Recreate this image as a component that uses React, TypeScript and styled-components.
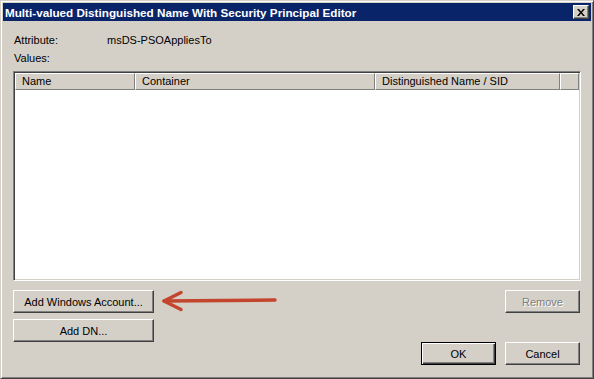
import React from "react";
import styled, { createGlobalStyle } from "styled-components";

const columns = [
  { label: "Name", width: 120 },
  { label: "Container", width: 240 },
  { label: "Distinguished Name / SID", width: 185 },
  { label: "", width: 19 },
];

const App = () => {
  return (
    <>
      <GlobalStyle />
      <Window>
        <TitleBar>
          <Title>Multi-valued Distinguished Name With Security Principal Editor</Title>
          <CloseButton aria-label="Close">
            <svg width="8" height="7" viewBox="0 0 8 7">
              <path d="M0 0h2l2 2.5L6 0h2L5 3.5 8 7H6L4 4.5 2 7H0l3-3.5z" fill="#000" />
            </svg>
          </CloseButton>
        </TitleBar>
        <Body>
          <FieldRow>
            <FieldLabel>Attribute:</FieldLabel>
            <span>msDS-PSOAppliesTo</span>
          </FieldRow>
          <FieldRow>
            <FieldLabel>Values:</FieldLabel>
          </FieldRow>
          <ListView>
            <HeaderRow>
              {columns.map((c, i) => (
                <HeaderCell key={i} style={{ width: c.width }}>
                  {c.label}
                </HeaderCell>
              ))}
            </HeaderRow>
          </ListView>
          <Bottom>
            <ButtonStack>
              <Button $wide>Add Windows Account...</Button>
              <Button $wide>Add DN...</Button>
            </ButtonStack>
            <RightStack>
              <Button disabled>Remove</Button>
              <ButtonRow>
                <Button $default>OK</Button>
                <Button>Cancel</Button>
              </ButtonRow>
            </RightStack>
          </Bottom>
        </Body>
        <Arrow width="120" height="24" viewBox="0 0 120 24">
          <path d="M3 12 L114 11" stroke="#c4452d" strokeWidth="3.5" strokeLinecap="round" />
          <path d="M20 3.5 L3 12 L20 20.5" stroke="#c4452d" strokeWidth="3.5" fill="none" strokeLinecap="round" strokeLinejoin="round" />
        </Arrow>
      </Window>
    </>
  );
};
export default App;

// styled-components -----------------
const GlobalStyle = createGlobalStyle`
  html, body {
    margin: 0;
    padding: 0;
    background: #d4d0c8;
  }
  body {
    font-family: Tahoma, "Liberation Sans", Arial, sans-serif;
    font-size: 11px;
    color: #000;
  }
`;

const Window = styled.div`
  width: 594px;
  height: 379px;
  box-sizing: border-box;
  background: #d4d0c8;
  border: 1px solid;
  border-color: #d4d0c8 #404040 #404040 #d4d0c8;
  box-shadow: inset 1px 1px 0 #fff, inset -1px -1px 0 #808080;
  padding: 2px;
  display: flex;
  flex-direction: column;
  position: relative;
`;

const TitleBar = styled.div`
  height: 18px;
  background: #0a246a;
  display: flex;
  align-items: center;
  justify-content: space-between;
  padding: 0 2px 0 2px;
`;

const Title = styled.div`
  color: #fff;
  font-weight: bold;
  font-size: 11.7px;
  white-space: nowrap;
`;

const CloseButton = styled.button`
  width: 16px;
  height: 14px;
  padding: 0;
  background: #d4d0c8;
  border: 1px solid;
  border-color: #fff #404040 #404040 #fff;
  box-shadow: inset -1px -1px 0 #808080;
  display: flex;
  align-items: center;
  justify-content: center;
`;

const Body = styled.div`
  flex: 1;
  padding: 13px 10px 0 10px;
  display: flex;
  flex-direction: column;
`;

const FieldRow = styled.div`
  display: flex;
  height: 13px;
  line-height: 13px;
  margin-bottom: 5px;
  padding-left: 1px;
`;

const FieldLabel = styled.span`
  width: 93px;
`;

const ListView = styled.div`
  margin-top: 1px;
  height: 210px;
  box-sizing: border-box;
  background: #fff;
  border: 1px solid;
  border-color: #808080 #fff #fff #808080;
  box-shadow: inset 1px 1px 0 #404040, inset -1px -1px 0 #d4d0c8;
  padding: 2px;
  overflow: hidden;
`;

const HeaderRow = styled.div`
  display: flex;
  height: 17px;
  margin: -1px -1px 0 -1px;
`;

const HeaderCell = styled.div`
  box-sizing: border-box;
  height: 17px;
  line-height: 15px;
  padding-left: 6px;
  background: #d4d0c8;
  border: 1px solid;
  border-color: #fff #808080 #808080 #fff;
  white-space: nowrap;
  overflow: hidden;
`;

const Bottom = styled.div`
  display: flex;
  justify-content: space-between;
  margin-top: 9px;
`;

const ButtonStack = styled.div`
  display: flex;
  flex-direction: column;
  gap: 6px;
`;

const RightStack = styled.div`
  display: flex;
  flex-direction: column;
  align-items: flex-end;
  justify-content: space-between;
  height: 75px;
  margin-right: 1px;
`;

const ButtonRow = styled.div`
  display: flex;
  gap: 9px;
`;

const Button = styled.button<{ $wide?: boolean; $default?: boolean }>`
  width: ${(p) => (p.$wide ? "141px" : "75px")};
  height: 23px;
  box-sizing: border-box;
  padding: 0;
  font-family: Tahoma, "Liberation Sans", Arial, sans-serif;
  font-size: 11px;
  color: #000;
  background: #d4d0c8;
  border: 1px solid;
  border-color: ${(p) => (p.$default ? "#000" : "#fff #404040 #404040 #fff")};
  box-shadow: ${(p) =>
    p.$default
      ? "inset 1px 1px 0 #fff, inset -1px -1px 0 #404040, inset -2px -2px 0 #808080"
      : "inset -1px -1px 0 #808080"};
  &:disabled {
    color: #808080;
    text-shadow: 1px 1px 0 #fff;
  }
`;

const Arrow = styled.svg`
  position: absolute;
  left: 160px;
  top: 288px;
`;
